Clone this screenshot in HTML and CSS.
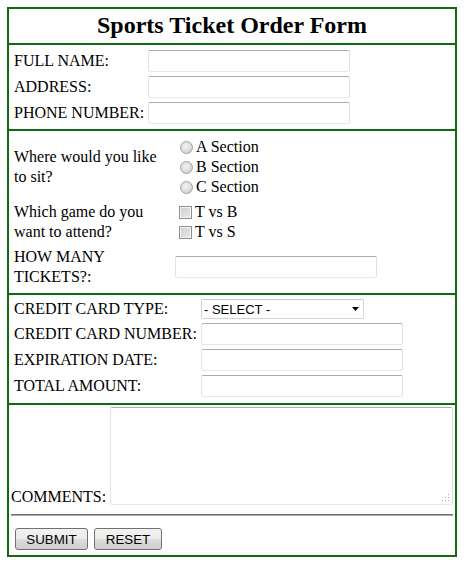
FILE: index.html
```html
<!DOCTYPE html>
<html>
<head>
<meta charset="utf-8">
<title>Sports Ticket Order Form</title>
<link rel="stylesheet" href="styles.css">
</head>
<body>
<form class="order">
  <div class="head"><h2 class="title">Sports Ticket Order Form</h2></div>

  <div class="sec sec-info">
    <label class="lbl">FULL NAME:</label><input class="txt" type="text">
    <label class="lbl">ADDRESS:</label><input class="txt" type="text">
    <label class="lbl">PHONE NUMBER:</label><input class="txt" type="text">
  </div>

  <div class="sec sec-game">
    <div class="lbl wrap">Where would you like to sit?</div>
    <div class="opts">
      <label class="opt"><input class="rad" type="radio" name="sec">A Section</label>
      <label class="opt"><input class="rad" type="radio" name="sec">B Section</label>
      <label class="opt"><input class="rad" type="radio" name="sec">C Section</label>
    </div>
    <div class="lbl wrap">Which game do you want to attend?</div>
    <div class="opts">
      <label class="opt"><input class="chk" type="checkbox">T vs B</label>
      <label class="opt"><input class="chk" type="checkbox">T vs S</label>
    </div>
    <div class="lbl wrap">HOW MANY TICKETS?:</div>
    <div class="opts mid"><input class="txt" type="text"></div>
  </div>

  <div class="sec sec-card">
    <label class="lbl">CREDIT CARD TYPE:</label>
    <div class="selwrap">
      <select class="sel"><option>- SELECT -</option><option>VISA</option><option>MASTERCARD</option></select>
      <svg class="arrow" width="7" height="4" viewBox="0 0 7 4"><path d="M0 0h7L3.5 4z" fill="#000"/></svg>
    </div>
    <label class="lbl">CREDIT CARD NUMBER:</label><input class="txt" type="text">
    <label class="lbl">EXPIRATION DATE:</label><input class="txt" type="text">
    <label class="lbl">TOTAL AMOUNT:</label><input class="txt" type="text">
  </div>

  <div class="sec sec-comm">
    <div class="commrow">
      <label class="lbl comm">COMMENTS:</label>
      <div class="areawrap">
        <textarea class="area"></textarea>
        <svg class="grip" width="7" height="7" viewBox="0 0 7 7">
          <rect x="6" y="0" width="1" height="1" fill="#a0a0a0"/>
          <rect x="3" y="3" width="1" height="1" fill="#a0a0a0"/>
          <rect x="6" y="3" width="1" height="1" fill="#a0a0a0"/>
          <rect x="0" y="6" width="1" height="1" fill="#a0a0a0"/>
          <rect x="3" y="6" width="1" height="1" fill="#a0a0a0"/>
          <rect x="6" y="6" width="1" height="1" fill="#a0a0a0"/>
        </svg>
      </div>
    </div>
    <hr class="rule">
    <div class="btns">
      <button type="submit" class="btn b-sub">SUBMIT</button>
      <button type="reset" class="btn b-res">RESET</button>
    </div>
  </div>
</form>
</body>
</html>
```

FILE: styles.css
```css
html, body {
  margin: 0;
  padding: 0;
  background: #fff;
}
body {
  font-family: "Liberation Serif", "Times New Roman", serif;
  font-size: 16px;
  color: #000;
}
.order {
  margin: 7px 0 0 7px;
  width: 446px;
  border: 2px solid #0e6b12;
}
.head {
  height: 34px;
}
.title {
  margin: 0;
  font-size: 24px;
  font-weight: bold;
  line-height: 32px;
  text-align: center;
}
.sec {
  border-top: 2px solid #0e6b12;
}
.lbl {
  line-height: 20px;
}
.sec-info {
  display: grid;
  grid-template-columns: 134px 202px;
  row-gap: 4px;
  align-items: center;
  padding: 5px 5px 5px 5px;
}
.txt {
  box-sizing: border-box;
  width: 202px;
  height: 22px;
  margin: 0;
  padding: 1px 3px;
  border: 1px solid;
  border-color: #abadb3 #dbdfe6 #e3e9ef #e2e3ea;
  border-radius: 2px;
  background: #fff;
  font: 13px "Liberation Sans", Arial, sans-serif;
  outline: none;
}
.sec-game {
  display: grid;
  grid-template-columns: 156px 1fr;
  column-gap: 5px;
  row-gap: 5px;
  align-items: center;
  padding: 6px 5px 6px 5px;
}
.opts {
  display: flex;
  flex-direction: column;
}
.opts.mid {
  height: 40px;
  justify-content: center;
}
.opt {
  display: flex;
  align-items: center;
  height: 20px;
  line-height: 20px;
}
.rad {
  appearance: none;
  -webkit-appearance: none;
  box-sizing: border-box;
  width: 13px;
  height: 13px;
  margin: 0 3px 0 5px;
  border: 1px solid #a2a2a2;
  border-radius: 50%;
  background: radial-gradient(circle at 45% 40%, #f4f4f4 0%, #dcdcdc 55%, #c4c4c4 100%);
}
.chk {
  appearance: none;
  -webkit-appearance: none;
  box-sizing: border-box;
  width: 13px;
  height: 13px;
  margin: 0 3px 0 4px;
  border: 1px solid #8f8f8f;
  border-radius: 0;
  background: linear-gradient(135deg, #cfcfcf 0%, #e8e8e8 100%);
  box-shadow: inset 0 0 0 1px #f4f4f4;
}
.sec-card {
  display: grid;
  grid-template-columns: 187px 202px;
  row-gap: 4px;
  align-items: center;
  padding: 4px 5px 6px 5px;
}
.selwrap {
  position: relative;
  width: 163px;
  height: 20px;
}
.sel {
  appearance: none;
  -webkit-appearance: none;
  box-sizing: border-box;
  width: 163px;
  height: 20px;
  margin: 0;
  padding: 0 0 0 2px;
  border: 1px solid #d4d4d4;
  border-top-color: #c4c4c4;
  border-radius: 2px;
  background: #fff;
  color: #000;
  font: 13px "Liberation Sans", Arial, sans-serif;
  outline: none;
}
.arrow {
  position: absolute;
  left: 151px;
  top: 8px;
  pointer-events: none;
}
.sec-comm {
  padding: 2px 2px 5px 2px;
}
.commrow {
  display: flex;
  align-items: flex-end;
}
.comm {
  line-height: 18px;
  margin-right: 4px;
  margin-bottom: -1px;
}
.areawrap {
  position: relative;
  width: 343px;
  height: 98px;
}
.area {
  display: block;
  box-sizing: border-box;
  width: 343px;
  height: 98px;
  margin: 0;
  padding: 2px;
  border: 1px solid;
  border-color: #abadb3 #dbdfe6 #e3e9ef #e2e3ea;
  border-radius: 2px;
  font: 13px "Liberation Mono", monospace;
  outline: none;
  resize: none;
}
.grip {
  position: absolute;
  right: 4px;
  bottom: 4px;
  pointer-events: none;
}
.rule {
  margin: 9px 0 0 0;
  height: 0;
  border: 0;
  border-top: 1px solid #6e6e6e;
  border-bottom: 1px solid #a8a8a8;
}
.btns {
  display: flex;
  gap: 6px;
  margin: 12px 0 0 4px;
}
.btn {
  box-sizing: border-box;
  height: 22px;
  margin: 0;
  padding: 0;
  border: 1px solid #707070;
  border-radius: 3px;
  background: linear-gradient(#f2f2f2 0%, #ebebeb 48%, #dddddd 52%, #cfcfcf 100%);
  color: #000;
  font: 13.33px "Liberation Sans", Arial, sans-serif;
}
.b-sub { width: 73px; }
.b-res { width: 68px; }
```
